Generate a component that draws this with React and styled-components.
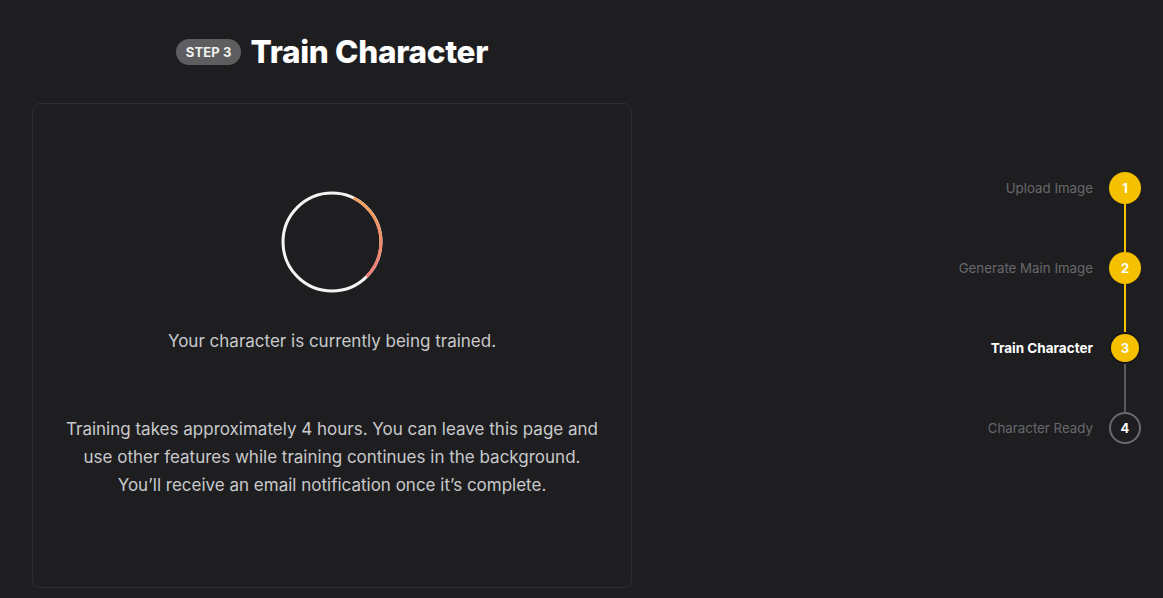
import React from "react";
import styled, { createGlobalStyle } from "styled-components";

const Global = createGlobalStyle`
  html, body { margin: 0; padding: 0; background: #1e1e20; }
  body { font-family: Inter, "Noto Sans", sans-serif; color: #fff; -webkit-font-smoothing: antialiased; }
`;

const Page = styled.div`
  width: 1163px;
  height: 598px;
  overflow: hidden;
  display: flex;
  box-sizing: border-box;
  padding: 0 22px 0 32px;
  background: #1e1e20;
`;

const Main = styled.div`
  width: 600px;
  display: flex;
  flex-direction: column;
  align-items: center;
`;

const Header = styled.div`
  height: 103px;
  display: flex;
  align-items: center;
  gap: 9px;
  box-sizing: border-box;
`;

const Badge = styled.span`
  background: #5e5e60;
  color: #f2f2f2;
  font-weight: 700;
  font-size: 13px;
  height: 26px;
  line-height: 26px;
  padding: 0 10px;
  border-radius: 13px;
  letter-spacing: 0.1px;
`;

const Title = styled.h1`
  margin: 0;
  font-size: 31.5px;
  font-weight: 800;
  color: #ffffff;
  letter-spacing: -0.3px;
`;

const Card = styled.div`
  width: 600px;
  height: 485px;
  box-sizing: border-box;
  border: 1px solid #2e2e31;
  border-radius: 8px;
  display: flex;
  flex-direction: column;
  align-items: center;
  padding-top: 87px;
`;

const Spinner = styled.svg`
  width: 102px;
  height: 102px;
  display: block;
`;

const Status = styled.p`
  margin: 36px 0 0;
  font-size: 17px;
  color: #c9c9cc;
  line-height: 24px;
`;

const Info = styled.p`
  margin: 62px 0 0;
  font-size: 17px;
  color: #c9c9cc;
  line-height: 28px;
  text-align: center;
`;

const Side = styled.div`
  flex: 1;
  display: flex;
  justify-content: flex-end;
  padding-top: 172px;
`;

const Steps = styled.div`
  display: flex;
  flex-direction: column;
  align-items: flex-end;
`;

const Step = styled.div`
  display: flex;
  align-items: center;
  gap: 16px;
  height: 32px;
`;

const Label = styled.span`
  font-size: ${(p) => (p.$active ? "13.5px" : "13.3px")};
  color: ${(p) => (p.$active ? "#ffffff" : "#68686c")};
  font-weight: ${(p) => (p.$active ? 700 : 400)};
`;

const Dot = styled.div`
  width: 32px;
  height: 32px;
  display: flex;
  align-items: center;
  justify-content: center;
`;

const Circle = styled.div`
  width: ${(p) => (p.$small ? 28 : 32)}px;
  height: ${(p) => (p.$small ? 28 : 32)}px;
  box-sizing: border-box;
  border-radius: 50%;
  display: flex;
  align-items: center;
  justify-content: center;
  font-size: 13px;
  font-weight: 700;
  color: #fff;
  background: ${(p) => (p.$done ? "#f5c000" : "transparent")};
  border: ${(p) => (p.$done ? "none" : "2px solid #6a6a6e")};
  box-shadow: ${(p) => (p.$small ? "0 0 0 2px rgba(0,0,0,0.25)" : "none")};
`;

const Connector = styled.div`
  width: 2px;
  height: 48px;
  margin-right: 15px;
  background: ${(p) => (p.$done ? "#f5c000" : "#5a5a5e")};
`;

const steps = [
  { n: 1, label: "Upload Image", state: "done" },
  { n: 2, label: "Generate Main Image", state: "done" },
  { n: 3, label: "Train Character", state: "active" },
  { n: 4, label: "Character Ready", state: "todo" },
];

export default function App() {
  return (
    <>
      <Global />
      <Page>
        <Main>
          <Header>
            <Badge>STEP 3</Badge>
            <Title>Train Character</Title>
          </Header>
          <Card>
            <Spinner viewBox="0 0 102 102">
              <defs>
                <linearGradient id="arc" x1="0" y1="0" x2="0" y2="1">
                  <stop offset="0" stopColor="#f4a25a" />
                  <stop offset="1" stopColor="#f07a78" />
                </linearGradient>
              </defs>
              <circle cx="51" cy="51" r="49" fill="none" stroke="#f4f4f4" strokeWidth="3" />
              <path
                d="M 72.5 7 A 49 49 0 0 1 85.6 85.6"
                fill="none"
                stroke="url(#arc)"
                strokeWidth="3"
              />
            </Spinner>
            <Status>Your character is currently being trained.</Status>
            <Info>
              Training takes approximately 4 hours. You can leave this page and
              <br />
              use other features while training continues in the background.
              <br />
              You’ll receive an email notification once it’s complete.
            </Info>
          </Card>
        </Main>
        <Side>
          <Steps>
            {steps.map((s, i) => (
              <React.Fragment key={s.n}>
                <Step>
                  <Label $active={s.state === "active"}>{s.label}</Label>
                  <Dot>
                    <Circle $done={s.state !== "todo"} $small={s.state === "active"}>
                      {s.n}
                    </Circle>
                  </Dot>
                </Step>
                {i < steps.length - 1 && <Connector $done={i < 2} />}
              </React.Fragment>
            ))}
          </Steps>
        </Side>
      </Page>
    </>
  );
}
